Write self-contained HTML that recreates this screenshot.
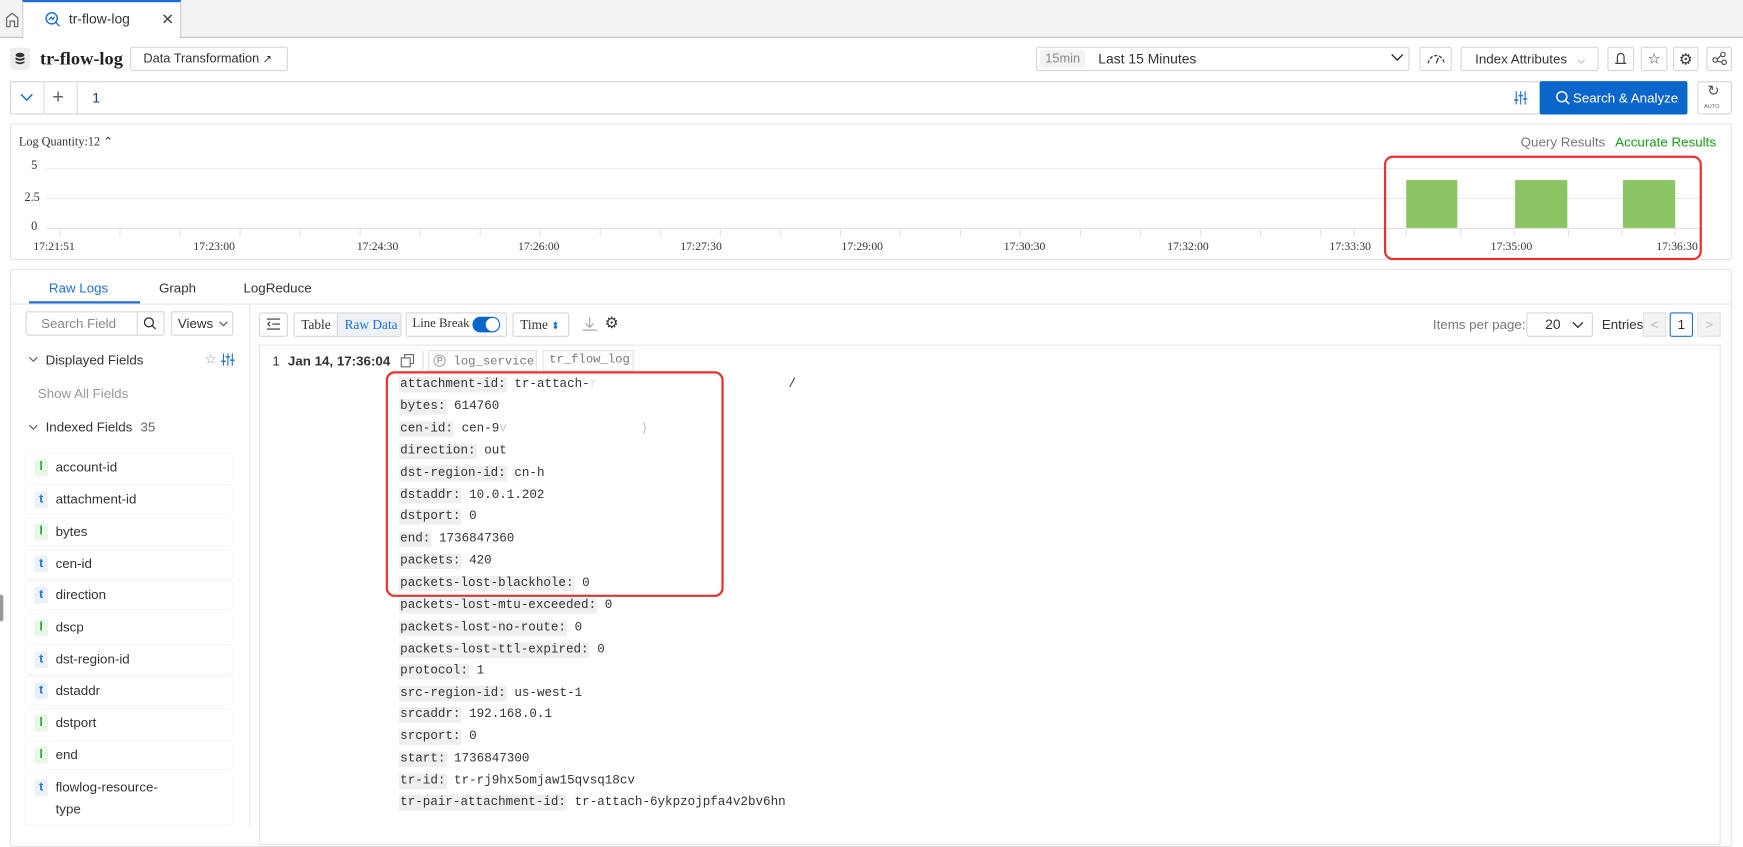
<!DOCTYPE html>
<html><head><meta charset="utf-8"><style>
*{box-sizing:border-box;margin:0;padding:0}
html,body{width:1743px;height:826px;overflow:hidden;background:#fff}
#w{position:absolute;left:0;top:0;width:1568px;height:743px;transform:scale(1.11161);transform-origin:0 0;font-family:"Liberation Sans",sans-serif;font-size:12px;color:#333}
.a{position:absolute;white-space:nowrap}
.b{position:absolute;border:1px solid #d6d6d6;background:#fff;border-radius:2px;white-space:nowrap}
.mono{font-family:"Liberation Mono",monospace}
.k{background:#efefef;padding:1px 1px}
.f{position:absolute;left:23px;width:186px;height:25px;background:#fff;box-shadow:0 0 2px rgba(0,0,0,.08);border-radius:3px;font-size:12px;line-height:25px;padding-left:27px;color:#333}
.f i{position:absolute;left:8px;top:5px;width:12px;height:15px;line-height:15px;text-align:center;font-style:normal;font-weight:bold;font-size:11px;border-radius:2px}
.t i{color:#1f6fd6;background:#e8f1fc}
.l i{color:#2aa82a;background:#e9f7e9}
.xl{position:absolute;top:217px;font-family:"Liberation Serif",serif;font-size:10.5px;color:#333}
.ln{position:absolute;left:359px;font-family:"Liberation Mono",monospace;font-size:11.3px;color:#333;height:17px;line-height:17px;white-space:nowrap}
</style></head><body><div id="w">
<!-- tab bar -->
<div class="a" style="left:0;top:0;width:1568px;height:34px;background:#f3f3f3;border-bottom:1px solid #bbb"></div>
<svg class="a" style="left:4px;top:10px" width="14" height="15" viewBox="0 0 14 15"><path d="M2 14V6L7 2L12 6V14H9V9H5V14Z" fill="none" stroke="#666" stroke-width="1.1"/></svg>
<div class="a" style="left:20px;top:0;width:143px;height:35px;background:#fff;border-left:1px solid #ccc;border-right:1px solid #ccc;border-top:2px solid #1f6fd6"></div>
<svg class="a" style="left:40px;top:10px" width="15" height="15" viewBox="0 0 15 15"><circle cx="6.5" cy="6.5" r="5" fill="none" stroke="#1f6fd6" stroke-width="1.3"/><path d="M10 10L13.5 13.5M4 8L6 5.5L7.5 7.5L9 5" fill="none" stroke="#1f6fd6" stroke-width="1.2"/></svg>
<div class="a" style="left:62px;top:10px;font-size:12.5px">tr-flow-log</div>
<div class="a" style="left:145px;top:9px;font-size:14px;color:#444">✕</div>
<!-- header -->
<div class="a" style="left:9px;top:43px;width:18px;height:20px;background:#eee;border-radius:3px"></div>
<svg class="a" style="left:13px;top:47px" width="10" height="12" viewBox="0 0 10 12"><ellipse cx="5" cy="2.5" rx="4" ry="2" fill="#333"/><path d="M1 4.5Q5 7 9 4.5V6.5Q5 9 1 6.5ZM1 8Q5 10.5 9 8V9.5Q5 12 1 9.5Z" fill="#333"/></svg>
<div class="a" style="left:36px;top:43px;font-family:'Liberation Serif',serif;font-weight:bold;font-size:16.5px;color:#222">tr-flow-log</div>
<div class="b" style="left:117px;top:42px;width:142px;height:22px;line-height:20px;padding-left:11px;font-size:11.5px">Data Transformation <span style="font-size:10px">↗</span></div>
<div class="b" style="left:932px;top:42px;width:336px;height:22px"></div>
<div class="a" style="left:936px;top:45px;width:40px;height:16px;background:#f2f2f2;color:#888;font-size:11.5px;line-height:16px;text-align:center">15min</div>
<div class="a" style="left:988px;top:46px;font-size:12.5px">Last 15 Minutes</div>
<svg class="a" style="left:1251px;top:48px" width="12" height="8"><path d="M1 1L6 6L11 1" fill="none" stroke="#333" stroke-width="1.3"/></svg>
<div class="b" style="left:1277px;top:42px;width:29px;height:22px"></div>
<svg class="a" style="left:1283px;top:46px" width="18" height="12"><path d="M2 11A7 7 0 0 1 16 11" fill="none" stroke="#444" stroke-width="1.2" stroke-dasharray="3 1.5"/><path d="M9 11L11 6" stroke="#444" stroke-width="1.2"/></svg>
<div class="b" style="left:1314px;top:42px;width:124px;height:22px;line-height:20px;padding-left:12px;font-size:12px">Index Attributes <span style="font-size:9px;color:#666;margin-left:6px">⌵</span></div>
<div class="b" style="left:1446px;top:42px;width:24px;height:22px"></div>
<svg class="a" style="left:1452px;top:46px" width="12" height="14"><path d="M3 11V5A3 3 0 0 1 9 5V11ZM1 11H11" fill="none" stroke="#444" stroke-width="1.1"/></svg>
<div class="b" style="left:1476px;top:42px;width:24px;height:22px;text-align:center;line-height:20px;font-size:13px">☆</div>
<div class="b" style="left:1505px;top:42px;width:23px;height:22px;text-align:center;line-height:20px;font-size:14px">⚙</div>
<div class="b" style="left:1535px;top:42px;width:23px;height:22px"></div>
<svg class="a" style="left:1540px;top:46px" width="14" height="13"><circle cx="3" cy="8" r="2" fill="none" stroke="#444"/><circle cx="10" cy="3" r="2" fill="none" stroke="#444"/><circle cx="11" cy="10" r="2" fill="none" stroke="#444"/><path d="M5 7L8 4M5 9L9 10" stroke="#444"/></svg>
<!-- query bar -->
<div class="b" style="left:9px;top:73px;width:1509px;height:30px;border-radius:0"></div>
<div class="a" style="left:39px;top:74px;width:1px;height:28px;background:#ddd"></div>
<div class="a" style="left:69px;top:74px;width:1px;height:28px;background:#ddd"></div>
<svg class="a" style="left:18px;top:84px" width="12" height="8"><path d="M1 1L6 6L11 1" fill="none" stroke="#1f6fd6" stroke-width="1.4"/></svg>
<div class="a" style="left:47px;top:77px;font-size:18px;color:#666">+</div>
<div class="a" style="left:83px;top:81px;font-size:12.5px;color:#1a3a7a">1</div>
<svg class="a" style="left:1362px;top:82px" width="12" height="12"><path d="M2 0V12M6 0V12M10 0V12" stroke="#1f6fd6"/><path d="M0 8H4M4 4H8M8 7H12" stroke="#1f6fd6" stroke-width="1.3"/></svg>
<div class="a" style="left:1385px;top:73px;width:133px;height:30px;background:#0b66cc;border-radius:2px;color:#fff;font-size:12px;line-height:30px;padding-left:30px">Search &amp; Analyze</div>
<svg class="a" style="left:1399px;top:81px" width="13" height="14"><circle cx="6" cy="6" r="4.5" fill="none" stroke="#fff" stroke-width="1.3"/><path d="M9.5 9.5L12.5 12.5" stroke="#fff" stroke-width="1.3"/></svg>
<div class="b" style="left:1527px;top:73px;width:31px;height:30px"></div>
<div class="a" style="left:1536px;top:74px;font-size:13px;color:#555">↻</div>
<div class="a" style="left:1533px;top:93px;font-size:5px;color:#666">AUTO</div>
<!-- chart -->
<div class="b" style="left:9px;top:111px;width:1549px;height:123px;border-color:#e4e4e4"></div>
<div class="a" style="left:17px;top:121px;font-family:'Liberation Serif',serif;font-size:11px">Log Quantity:12 <span style="font-family:'Liberation Sans'">⌃</span></div>
<div class="a" style="left:1368px;top:121px;color:#777;font-size:12px">Query Results</div>
<div class="a" style="left:1453px;top:121px;color:#12a012;font-size:12px">Accurate Results</div>
<div class="a" style="left:28px;top:143px;font-family:'Liberation Serif',serif;font-size:11px">5</div>
<div class="a" style="left:22px;top:172px;font-family:'Liberation Serif',serif;font-size:11px">2.5</div>
<div class="a" style="left:28px;top:198px;font-family:'Liberation Serif',serif;font-size:11px">0</div>
<div class="a" style="left:42px;top:151px;width:1488px;height:1px;background:#eaeaea"></div>
<div class="a" style="left:42px;top:178px;width:1488px;height:1px;background:#eaeaea"></div>
<div class="a" style="left:42px;top:205px;width:1488px;height:1px;background:#e0e0e0"></div>
<svg class="a" style="left:42px;top:205px" width="1490" height="10"><g stroke="#e3e3e3"><path d="M12 0V8M66 0V8M120 0V8M174 0V8M228 0V8M282 0V8M336 0V8M390 0V8M444 0V8M498 0V8M552 0V8M606 0V8M660 0V8M714 0V8M768 0V8M822 0V8M876 0V8M930 0V8M984 0V8M1038 0V8M1092 0V8M1146 0V8M1176 0V8M1223 0V8M1272 0V8M1320 0V8M1369 0V8M1417 0V8M1465 0V8"/></g></svg>
<div class="xl" style="left:30px">17:21:51</div><div class="xl" style="left:174px">17:23:00</div><div class="xl" style="left:321px">17:24:30</div><div class="xl" style="left:466px">17:26:00</div><div class="xl" style="left:612px">17:27:30</div><div class="xl" style="left:757px">17:29:00</div><div class="xl" style="left:903px">17:30:30</div><div class="xl" style="left:1050px">17:32:00</div><div class="xl" style="left:1196px">17:33:30</div><div class="xl" style="left:1341px">17:35:00</div><div class="xl" style="left:1490px">17:36:30</div>
<div class="a" style="left:1265px;top:162px;width:46px;height:43px;background:#8bc563"></div>
<div class="a" style="left:1363px;top:162px;width:47px;height:43px;background:#8bc563"></div>
<div class="a" style="left:1460px;top:162px;width:47px;height:43px;background:#8bc563"></div>
<div class="a" style="left:1245px;top:140px;width:286px;height:94px;border:2.5px solid #e8322e;border-radius:8px"></div>
<!-- main panel -->
<div class="b" style="left:9px;top:242px;width:1549px;height:520px;border-color:#e4e4e4"></div>
<div class="a" style="left:44px;top:252px;color:#1f6fd6;font-size:12px">Raw Logs</div>
<div class="a" style="left:143px;top:252px;font-size:12px">Graph</div>
<div class="a" style="left:219px;top:252px;font-size:12px">LogReduce</div>
<div class="a" style="left:10px;top:273px;width:1547px;height:1px;background:#e6e6e6"></div>
<div class="a" style="left:26px;top:271px;width:100px;height:2px;background:#1f6fd6"></div>
<div class="a" style="left:224px;top:274px;width:1px;height:470px;background:#e6e6e6"></div>
<div class="b" style="left:23px;top:280px;width:125px;height:22px;color:#888;line-height:20px;padding-left:13px">Search Field</div>
<div class="a" style="left:123px;top:281px;width:1px;height:20px;background:#d6d6d6"></div>
<svg class="a" style="left:129px;top:285px" width="12" height="12"><circle cx="5" cy="5" r="4" fill="none" stroke="#333" stroke-width="1.2"/><path d="M8 8L11 11" stroke="#333" stroke-width="1.2"/></svg>
<div class="b" style="left:154px;top:280px;width:56px;height:22px;line-height:20px;padding-left:5px;font-size:12px">Views</div>
<svg class="a" style="left:197px;top:289px" width="8" height="5"><path d="M0.5 0.5L4 4L7.5 0.5" fill="none" stroke="#555"/></svg>
<svg class="a" style="left:26px;top:321px" width="8" height="5"><path d="M0.5 0.5L4 4L7.5 0.5" fill="none" stroke="#555"/></svg>
<div class="a" style="left:41px;top:317px;font-size:12px">Displayed Fields</div>
<div class="a" style="left:184px;top:316px;font-size:12px;color:#999">☆</div>
<svg class="a" style="left:199px;top:318px" width="12" height="11"><path d="M2 0V11M6 0V11M10 0V11" stroke="#1f6fd6"/><path d="M0 7H4M4 3H8M8 6H12" stroke="#1f6fd6" stroke-width="1.3"/></svg>
<div class="a" style="left:34px;top:347px;color:#999;font-size:12px">Show All Fields</div>
<svg class="a" style="left:26px;top:382px" width="8" height="5"><path d="M0.5 0.5L4 4L7.5 0.5" fill="none" stroke="#555"/></svg>
<div class="a" style="left:41px;top:377px;font-size:12px">Indexed Fields <span style="color:#666;margin-left:4px">35</span></div>
<div class="f l" style="top:408px"><i>l</i>account-id</div>
<div class="f t" style="top:437px"><i>t</i>attachment-id</div>
<div class="f l" style="top:466px"><i>l</i>bytes</div>
<div class="f t" style="top:495px"><i>t</i>cen-id</div>
<div class="f t" style="top:523px"><i>t</i>direction</div>
<div class="f l" style="top:552px"><i>l</i>dscp</div>
<div class="f t" style="top:581px"><i>t</i>dst-region-id</div>
<div class="f t" style="top:609px"><i>t</i>dstaddr</div>
<div class="f l" style="top:638px"><i>l</i>dstport</div>
<div class="f l" style="top:667px"><i>l</i>end</div>
<div class="f t" style="top:696px;height:46px;line-height:20px;padding-top:2px"><i>t</i>flowlog-resource-<br>type</div>
<div class="a" style="left:0;top:535px;width:3px;height:24px;background:#999;border-radius:0 2px 2px 0"></div>
<!-- toolbar -->
<div class="b" style="left:233px;top:281px;width:26px;height:22px"></div>
<svg class="a" style="left:240px;top:286px" width="12" height="11"><path d="M0 1H12M5 5.5H12M0 10H12M3 3.5L1 5.5L3 7.5" fill="none" stroke="#333"/></svg>
<div class="b" style="left:264px;top:281px;width:97px;height:22px"></div>
<div class="a" style="left:303px;top:282px;width:57px;height:20px;background:#eef2f7;border-left:1px solid #d6d6d6"></div>
<div class="a" style="left:271px;top:285px;font-family:'Liberation Serif',serif;font-size:12px">Table</div>
<div class="a" style="left:310px;top:285px;font-family:'Liberation Serif',serif;font-size:12px;color:#1f6fd6">Raw Data</div>
<div class="b" style="left:365px;top:281px;width:91px;height:22px"></div>
<div class="a" style="left:371px;top:285px;font-family:'Liberation Serif',serif;font-size:11.5px">Line Break</div>
<div class="a" style="left:425px;top:285px;width:25px;height:14px;background:#0b66cc;border-radius:7px"></div>
<div class="a" style="left:437px;top:286px;width:12px;height:12px;background:#fff;border-radius:6px"></div>
<div class="b" style="left:461px;top:281px;width:51px;height:22px"></div>
<div class="a" style="left:468px;top:285px;font-family:'Liberation Serif',serif;font-size:12px">Time <span style="color:#1f6fd6;font-size:9px">⬍</span></div>
<svg class="a" style="left:524px;top:285px" width="13" height="13"><path d="M6.5 0V9M3 6L6.5 9.5L10 6M0 12H13" fill="none" stroke="#aaa" stroke-width="1.1"/></svg>
<div class="a" style="left:544px;top:282px;font-size:14px;color:#333">⚙</div>
<div class="a" style="left:1289px;top:285px;color:#777;font-size:12px">Items per page:</div>
<div class="b" style="left:1373px;top:281px;width:60px;height:22px;line-height:20px;padding-left:16px;font-size:12.5px">20</div>
<svg class="a" style="left:1414px;top:289px" width="11" height="7"><path d="M1 1L5.5 5.5L10 1" fill="none" stroke="#333" stroke-width="1.2"/></svg>
<div class="a" style="left:1441px;top:285px;font-size:12px">Entries</div>
<div class="a" style="left:1478px;top:281px;width:21px;height:22px;background:#f3f3f3;border:1px solid #e3e3e3;color:#bbb;text-align:center;line-height:20px">&lt;</div>
<div class="a" style="left:1502px;top:281px;width:21px;height:22px;border:1px solid #1f6fd6;border-radius:2px;text-align:center;line-height:20px">1</div>
<div class="a" style="left:1527px;top:281px;width:21px;height:22px;background:#f3f3f3;border:1px solid #e3e3e3;color:#bbb;text-align:center;line-height:20px">&gt;</div>
<div class="a" style="left:233px;top:310px;width:1315px;height:450px;border:1px solid #e6e6e6"></div>
<!-- log row -->
<div class="a" style="left:245px;top:318px;font-size:12px">1</div>
<div class="a" style="left:259px;top:318px;font-size:12px;font-weight:bold">Jan 14, 17:36:04</div>
<svg class="a" style="left:360px;top:318px" width="13" height="13"><rect x="1" y="4" width="8" height="8" fill="none" stroke="#666"/><path d="M4 4V1H12V9H9" fill="none" stroke="#666"/></svg>
<div class="a" style="left:380px;top:316px;width:1px;height:17px;background:#ddd"></div>
<div class="a mono" style="left:385px;top:315px;width:98px;height:19px;border:1px solid #e3e3e3;color:#777;font-size:11px;line-height:17px;padding-left:4px"><span style="font-family:'Liberation Sans';font-size:8px;border:1px solid #aaa;border-radius:50%;padding:0 2px;vertical-align:1px">P</span> log_service</div>
<div class="a mono" style="left:488px;top:315px;width:82px;height:19px;border:1px solid #e3e3e3;color:#777;font-size:11px;line-height:17px;padding-left:5px">tr_flow_log</div>
<div class="ln" style="top:338px"><span class="k">attachment-id:</span> tr-attach-<span style="color:#ddd">r</span><span style="display:inline-block;width:172px"></span>/</div>
<div class="ln" style="top:358px"><span class="k">bytes:</span> 614760</div>
<div class="ln" style="top:378px"><span class="k">cen-id:</span> cen-9<span style="color:#ccc">v</span><span style="display:inline-block;width:120px"></span><span style="color:#bbb">)</span></div>
<div class="ln" style="top:398px"><span class="k">direction:</span> out</div>
<div class="ln" style="top:418px"><span class="k">dst-region-id:</span> cn-h</div>
<div class="ln" style="top:438px"><span class="k">dstaddr:</span> 10.0.1.202</div>
<div class="ln" style="top:457px"><span class="k">dstport:</span> 0</div>
<div class="ln" style="top:477px"><span class="k">end:</span> 1736847360</div>
<div class="ln" style="top:497px"><span class="k">packets:</span> 420</div>
<div class="ln" style="top:517px"><span class="k">packets-lost-blackhole:</span> 0</div>
<div class="ln" style="top:537px"><span class="k">packets-lost-mtu-exceeded:</span> 0</div>
<div class="ln" style="top:557px"><span class="k">packets-lost-no-route:</span> 0</div>
<div class="ln" style="top:577px"><span class="k">packets-lost-ttl-expired:</span> 0</div>
<div class="ln" style="top:596px"><span class="k">protocol:</span> 1</div>
<div class="ln" style="top:616px"><span class="k">src-region-id:</span> us-west-1</div>
<div class="ln" style="top:635px"><span class="k">srcaddr:</span> 192.168.0.1</div>
<div class="ln" style="top:655px"><span class="k">srcport:</span> 0</div>
<div class="ln" style="top:675px"><span class="k">start:</span> 1736847300</div>
<div class="ln" style="top:695px"><span class="k">tr-id:</span> tr-rj9hx5omjaw15qvsq18cv</div>
<div class="ln" style="top:714px"><span class="k">tr-pair-attachment-id:</span> tr-attach-6ykpzojpfa4v2bv6hn</div>
<div class="a" style="left:347px;top:334px;width:304px;height:203px;border:2.5px solid #e8322e;border-radius:8px"></div>
</div></body></html>
